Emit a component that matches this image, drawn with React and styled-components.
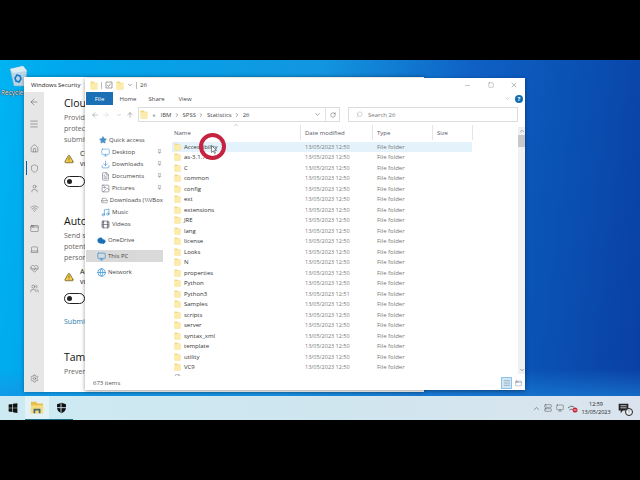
import React from 'react';
import styled, { createGlobalStyle } from 'styled-components';
import {
  ArrowLeft, ArrowRight, ArrowUp, ChevronDown, ChevronUp, ChevronRight, RotateCw, Search, Menu, Home, Shield,
  User, Wifi, AppWindow, Laptop, HeartPulse, Users, Settings, Minus, Square, X, Pin, Star, Monitor,
  Download, FileText, Image, HardDrive, Music, Film, Cloud, Globe, TriangleAlert, Server,
} from 'lucide-react';

const GlobalStyle = createGlobalStyle`
  html, body { margin: 0; padding: 0; background: #000; }
  body { font-family: "Open Sans", "Noto Sans", sans-serif; }
`;

const Screen = styled.div`
  width: 640px;
  height: 480px;
  display: flex;
  flex-direction: column;
  overflow: hidden;
  background: #000;
`;

const Bars = styled.div`
  height: ${p => p.$h}px;
  flex: none;
`;

const Desktop = styled.div`
  position: relative;
  height: 336px;
  flex: none;
  overflow: hidden;
  background:
    linear-gradient(to bottom, rgba(30, 140, 225, 0) 92%, rgba(30, 140, 225, 0.55) 100%),
    linear-gradient(97deg, #00b4f2 0%, #00a6ec 10%, #1296e0 47%, #0f60c4 70%, #0a52b4 84%, #0a3fa5 100%);
`;

const DesktopIcon = styled.div`
  position: absolute;
  left: 1px;
  top: 4px;
  width: 34px;
  display: flex;
  flex-direction: column;
  align-items: center;
  font-size: 6.5px;
  line-height: 9px;
  color: #fff;
  text-shadow: 0 0 1px #000, 0 0 1px #000;
  white-space: nowrap;
`;

/* Windows Security, behind */
const SecurityWindow = styled.div`
  position: absolute;
  left: 24px;
  top: 17px;
  width: 400px;
  height: 315px;
  background: #fff;
  display: flex;
  flex-direction: column;
  overflow: hidden;
  box-shadow: 0 0 4px rgba(0, 0, 0, 0.35);
`;

const SecTitle = styled.div`
  height: 15px;
  flex: none;
  display: flex;
  align-items: center;
  padding-left: 7px;
  font-size: 6px;
  color: #222;
`;

const SecBody = styled.div`
  flex: 1;
  display: flex;
  min-height: 0;
`;

const SideRail = styled.div`
  width: 20px;
  flex: none;
  background: #e6e6e6;
  display: flex;
  flex-direction: column;
  align-items: center;
  color: #333;
`;

const RailItem = styled.div`
  position: relative;
  width: 100%;
  height: ${p => p.$h || 20}px;
  margin-top: ${p => p.$mt || 0}px;
  display: flex;
  align-items: center;
  justify-content: center;
  ${p => p.$active && `
    &::before {
      content: '';
      position: absolute;
      left: 2px;
      top: 3px;
      bottom: 3px;
      width: 1px;
      background: #0a5c9e;
    }
  `}
`;

const SecContent = styled.div`
  flex: 1;
  padding: 3px 0 0 20px;
  white-space: nowrap;
`;

const SecHeading = styled.div`
  font-size: 10.5px;
  line-height: 16px;
  color: #111;
  margin-top: ${p => p.$mt || 0}px;
`;

const SecText = styled.div`
  font-size: 7px;
  line-height: 11px;
  color: #666;
  margin-top: 1px;
`;

const WarnRow = styled.div`
  display: flex;
  align-items: center;
  gap: 6px;
  margin-top: 4px;
  font-size: 7px;
  line-height: 10px;
  color: #222;
`;

const Toggle = styled.div`
  width: 21px;
  height: 11px;
  margin-top: ${p => p.$mt}px;
  box-sizing: border-box;
  border: 1px solid #222;
  border-radius: 6px;
  display: flex;
  align-items: center;
  padding-left: 2px;

  &::before {
    content: '';
    width: 5px;
    height: 5px;
    border-radius: 50%;
    background: #222;
  }
`;

const SecLink = styled.div`
  font-size: 7px;
  line-height: 10px;
  color: #2a7bae;
  margin-top: 13px;
`;

/* File Explorer */
const Explorer = styled.div`
  position: absolute;
  left: 85px;
  top: 18px;
  width: 440px;
  height: 312px;
  background: #fff;
  display: flex;
  flex-direction: column;
  overflow: hidden;
  color: #333;
  box-shadow: 0 1px 4px rgba(0, 0, 0, 0.4);
`;

const TitleBar = styled.div`
  height: 14px;
  flex: none;
  display: flex;
  align-items: center;
  padding-left: 5px;
  gap: 3px;
  font-size: 6px;
  color: #444;
`;

const TitleSep = styled.span`
  width: 1px;
  height: 7px;
  background: #bbb;
`;

const WinControls = styled.div`
  margin-left: auto;
  display: flex;
  color: #555;
`;

const WinControl = styled.div`
  width: 23px;
  height: 14px;
  display: flex;
  align-items: center;
  justify-content: center;
`;

const TabRow = styled.div`
  height: 13px;
  flex: none;
  display: flex;
  align-items: stretch;
  padding-left: 1px;
  font-size: 6px;
`;

const Tab = styled.div`
  width: ${p => p.$w}px;
  display: flex;
  align-items: center;
  justify-content: center;
  background: ${p => (p.$file ? '#1a6fb5' : 'transparent')};
  color: ${p => (p.$file ? '#fff' : '#444')};
`;

const HelpArea = styled.div`
  margin-left: auto;
  display: flex;
  align-items: center;
  gap: 4px;
  padding-right: 2px;
  color: #666;
`;

const HelpDot = styled.div`
  width: 8px;
  height: 8px;
  border-radius: 50%;
  background: #0f6cae;
  color: #fff;
  font-size: 6px;
  font-weight: 700;
  line-height: 8px;
  text-align: center;
`;

const AddressRow = styled.div`
  height: 15px;
  margin-top: 2px;
  flex: none;
  display: flex;
  align-items: center;
  color: #777;
`;

const NavButtons = styled.div`
  width: 53px;
  flex: none;
  display: flex;
  align-items: center;
  padding-left: 6px;
  box-sizing: border-box;
`;

const NavButton = styled.div`
  width: ${p => p.$w}px;
  display: flex;
  justify-content: center;
`;

const AddressBox = styled.div`
  width: 202px;
  height: 15px;
  box-sizing: border-box;
  border: 1px solid #dcdcdc;
  display: flex;
  align-items: center;
  font-size: 6px;
  color: #444;
  padding-left: 1px;
  gap: 2.500px;
`;

const AddressCrumbStart = styled.span`
  padding: 0 1px 0 2px;
`;

const AddressTools = styled.div`
  margin-left: auto;
  display: flex;
  align-items: center;
  align-self: stretch;
  gap: 4px;
  padding-right: 3px;
  color: #666;
`;

const AddressDivider = styled.span`
  width: 1px;
  align-self: stretch;
  background: #e2e2e2;
`;

const SearchBox = styled.div`
  width: 170px;
  height: 15px;
  box-sizing: border-box;
  border: 1px solid #dcdcdc;
  margin-left: 8px;
  display: flex;
  align-items: center;
  gap: 5px;
  padding-left: 7px;
  font-size: 6px;
  color: #777;
`;

const Main = styled.div`
  flex: 1;
  min-height: 0;
  display: flex;
`;

const NavPane = styled.div`
  width: 87px;
  flex: none;
  padding: 12px 0 0 1px;
  box-sizing: border-box;
`;

const NavItem = styled.div`
  height: 12px;
  margin-top: ${p => p.$mt || 0}px;
  padding-left: ${p => p.$indent}px;
  display: flex;
  align-items: center;
  gap: 2px;
  font-size: 6px;
  color: #444;
  white-space: nowrap;
  background: ${p => (p.$active ? '#d9d9d9' : 'transparent')};
  width: 77px;
  box-sizing: border-box;
  position: relative;
`;

const PinMark = styled.span`
  position: absolute;
  left: 71px;
  top: 3px;
  color: #777;
  display: flex;
`;

const ListPane = styled.div`
  flex: 1;
  min-width: 0;
  display: flex;
  flex-direction: column;
`;

const HeaderRow = styled.div`
  height: 15px;
  flex: none;
  margin-top: 3px;
  display: flex;
  position: relative;
  font-size: 6px;
  color: #556;
`;

const HeaderCell = styled.div`
  width: ${p => p.$w}px;
  box-sizing: border-box;
  padding-left: ${p => p.$pl || 4}px;
  border-right: 1px solid #e5e5e5;
  display: flex;
  align-items: center;
`;

const SortCaret = styled.span`
  position: absolute;
  left: 61px;
  top: -3px;
  color: #999;
  display: flex;
`;

const Rows = styled.div`
  flex: 1;
  min-height: 0;
  overflow: hidden;
  margin-top: 1.500px;
`;

const Row = styled.div`
  height: 10.5px;
  width: 300px;
  display: flex;
  align-items: center;
  font-size: 6px;
  background: ${p => (p.$selected ? '#e3f2fb' : 'transparent')};
`;

const NameCell = styled.div`
  width: 133px;
  padding-left: 2px;
  box-sizing: border-box;
  display: flex;
  align-items: center;
  gap: 3px;
  color: #333;
  white-space: nowrap;
`;

const DateCell = styled.div`
  width: 72px;
  font-size: 5.500px;
  color: #777;
  white-space: nowrap;
`;

const TypeCell = styled.div`
  width: 68px;
  color: #777;
  white-space: nowrap;
`;

const ScrollBar = styled.div`
  width: 7px;
  flex: none;
  margin: 5px 0 2px auto;
  background: #f0f0f0;
  display: flex;
  flex-direction: column;
  align-items: center;
  color: #555;
`;

const ScrollEnd = styled.div`
  height: 8px;
  margin-top: ${p => (p.$bottom ? 'auto' : 0)};
  display: flex;
  align-items: center;
`;

const ScrollThumb = styled.div`
  width: 7px;
  height: 12px;
  background: #c8c8c8;
`;

const StatusBar = styled.div`
  height: 14px;
  flex: none;
  display: flex;
  align-items: center;
  padding-left: 8px;
  font-size: 6px;
  color: #555;
`;

const ViewButtons = styled.div`
  margin-left: auto;
  display: flex;
  gap: 1px;
  padding-right: 1px;
`;

const ViewButton = styled.div`
  width: 11px;
  height: 12px;
  box-sizing: border-box;
  display: flex;
  align-items: center;
  justify-content: center;
  background: ${p => (p.$on ? '#cfe6f5' : 'transparent')};
  border: 1px solid ${p => (p.$on ? '#8fc4e6' : 'transparent')};
  color: #567;
`;

/* Click highlight, over the list */
const ClickRing = styled.div`
  position: absolute;
  left: 199px;
  top: 73px;
  width: 27px;
  height: 27px;
  box-sizing: border-box;
  border: 4px solid #c5233f;
  border-radius: 50%;
`;

const Pointer = styled.svg`
  position: absolute;
  left: 211px;
  top: 85px;
`;

/* Taskbar */
const Taskbar = styled.div`
  height: 24px;
  flex: none;
  display: flex;
  align-items: center;
  background: linear-gradient(to right, #cdeaf2 0%, #cfe6ef 50%, #dbe4ee 100%);
  color: #111;
`;

const StartButton = styled.div`
  width: 25px;
  height: 24px;
  display: flex;
  align-items: center;
  justify-content: center;
`;

const TaskButton = styled.div`
  width: ${p => p.$w || 24}px;
  height: 24px;
  box-sizing: border-box;
  display: flex;
  align-items: center;
  justify-content: center;
  background: ${p => (p.$active ? '#e3f2f7' : 'transparent')};
  border-bottom: 1px solid #1d6f86;
`;

const Tray = styled.div`
  margin-left: auto;
  display: flex;
  align-items: center;
  color: #333;
`;

const TrayIcon = styled.div`
  width: 12px;
  display: flex;
  justify-content: center;
`;

const Clock = styled.div`
  width: 38px;
  margin-left: -1px;
  text-align: center;
  font-size: 5.500px;
  line-height: 8px;
  color: #222;
`;

const NotifyButton = styled.div`
  width: 25px;
  box-sizing: border-box;
  padding-left: 3px;
  display: flex;
  position: relative;
`;

const NotifyBadge = styled.span`
  position: absolute;
  left: 10px;
  top: 5px;
  width: 6px;
  height: 6px;
  border-radius: 50%;
  background: #e8eef2;
  border: 1px solid #222;
  font-size: 4px;
  line-height: 6px;
  text-align: center;
`;

const FolderIcon = ({ size = 8 }) => (
  <svg width={size} height={size + 1} viewBox="0 0 14 16">
    <path d="M1 1h5l2 2h5v12H1z" fill="#f3d77c" />
    <path d="M1 4h12v11H1z" fill="#fbecab" />
  </svg>
);

const CheckBoxGlyph = () => (
  <svg width="8" height="8" viewBox="0 0 16 16" fill="none" stroke="#666" strokeWidth="1.200">
    <path d="M2 2h12v12H2z" />
    <path d="M4.500 8l2.500 3 4.500-6" />
  </svg>
);

const RecycleBin = () => (
  <svg width="22" height="24" viewBox="0 0 22 24">
    <path d="M3 5l13-3 4 5-2 15H7L3 5z" fill="#b8d6e6" stroke="#7fa6bc" strokeWidth="0.5" />
    <path d="M3 5l13-3 4 5-14 2z" fill="#dcecf4" />
    <path d="M10 11l3 1 1 3-2 3-3-1-1-3z" fill="none" stroke="#1b78c8" strokeWidth="1.6" />
  </svg>
);

const WinLogo = ({ size = 10, color = '#111' }) => (
  <svg width={size} height={size} viewBox="0 0 16 16" fill={color}>
    <path d="M1 2.500l6-1v6H1zM8 1.300l7-1.100V7.500H8zM1 8.500h6v6l-6-1zM8 8.500h7v7.300l-7-1.100z" />
  </svg>
);

const SecurityShield = () => (
  <svg width="11" height="12" viewBox="0 0 16 16">
    <path d="M8 0.500l6.500 2v5c0 4-3 6.500-6.500 8-3.500-1.500-6.500-4-6.500-8v-5z" fill="#111" />
    <path d="M7.300 1v14M1.500 7.500h13" stroke="#cde6ef" strokeWidth="1.300" />
  </svg>
);

const ExplorerGlyph = () => (
  <svg width="14" height="13" viewBox="0 0 16 15">
    <path d="M1 1h6l1.500 2H15v11H1z" fill="#e8c04e" />
    <path d="M1 5h14v9H1z" fill="#f6dc7c" />
    <path d="M4 9h8v5h-2v-3H6v3H4z" fill="#4a6a78" />
  </svg>
);

const NetworkOff = () => (
  <svg width="11" height="9" viewBox="0 0 22 18" fill="none">
    <path d="M2 8a9 9 0 0 1 12-2M5 12a5 5 0 0 1 6-1" stroke="#444" strokeWidth="1.500" />
    <circle cx="16" cy="12" r="5" fill="#c8202f" />
    <path d="M13 12h6" stroke="#fff" strokeWidth="1.500" />
  </svg>
);

const NotifyGlyph = () => (
  <svg width="11" height="11" viewBox="0 0 16 16">
    <path d="M1 1h14v10H7l-3 4v-4H1z" fill="#222" />
    <path d="M3.500 4h9M3.500 7h9" stroke="#dbe4ee" strokeWidth="1.200" />
  </svg>
);

const navItems = [
  { label: 'Desktop', Icon: Monitor, color: '#3b94d8', pin: true },
  { label: 'Downloads', Icon: Download, color: '#2f7fd0', pin: true },
  { label: 'Documents', Icon: FileText, color: '#667', pin: true },
  { label: 'Pictures', Icon: Image, color: '#667', pin: true },
  { label: 'Downloads (\\\\VBox', Icon: HardDrive, color: '#556' },
  { label: 'Music', Icon: Music, color: '#1f7fc8' },
  { label: 'Videos', Icon: Film, color: '#445' },
];

const folders = [
  'Accessibility', 'as-3.1.7b', 'C', 'common', 'config', 'ext', 'extensions', 'JRE', 'lang', 'license',
  'Looks', 'N', 'properties', 'Python', 'Python3', 'Samples', 'scripts', 'server', 'syntax_xml',
  'template', 'utility', 'VC9',
];

const railIcons = [
  { Icon: Shield, h: 20, active: true },
  { Icon: User, h: 20 },
  { Icon: Wifi, h: 20 },
  { Icon: AppWindow, h: 21 },
  { Icon: Laptop, h: 20 },
  { Icon: HeartPulse, h: 19 },
  { Icon: Users, h: 20 },
];

export default function App() {
  return (
    <Screen>
      <GlobalStyle />
      <Bars $h={60} />
      <Desktop>
        <DesktopIcon>
          <RecycleBin />
          <span>Recycle Bin</span>
        </DesktopIcon>

        <SecurityWindow>
          <SecTitle>Windows Security</SecTitle>
          <SecBody>
            <SideRail>
              <RailItem $h={20}><ArrowLeft size={10} strokeWidth={1} /></RailItem>
              <RailItem $h={12} $mt={6}><Menu size={10} strokeWidth={1} /></RailItem>
              <RailItem $h={20} $mt={8}><Home size={9} strokeWidth={1} /></RailItem>
              {railIcons.map(({ Icon, h, active }, i) => (
                <RailItem key={i} $h={h} $active={active}><Icon size={9} strokeWidth={1} /></RailItem>
              ))}
              <RailItem $h={12} $mt={74}><Settings size={9} strokeWidth={1} /></RailItem>
            </SideRail>
            <SecContent>
              <SecHeading>Cloud-delivered protection</SecHeading>
              <SecText>
                Provides increased and faster<br />
                protection with access to the latest<br />
                submitted samples.
              </SecText>
              <WarnRow>
                <TriangleAlert size={10} color="#4a3f10" fill="#f2c94c" strokeWidth={1.5} />
                <div>Cloud-delivered protection is off.<br />vulnerable.</div>
              </WarnRow>
              <Toggle $mt={7} />
              <SecHeading $mt={26}>Automatic sample submission</SecHeading>
              <SecText>
                Send sample files to Microsoft to<br />
                potentially protect you and others from<br />
                personal threats.
              </SecText>
              <WarnRow>
                <TriangleAlert size={10} color="#4a3f10" fill="#f2c94c" strokeWidth={1.5} />
                <div>Automatic sample submission is off.<br />vulnerable.</div>
              </WarnRow>
              <Toggle $mt={6} />
              <SecLink>Submit a sample manually</SecLink>
              <SecHeading $mt={22}>Tamper Protection</SecHeading>
              <SecText>Prevents others from tampering</SecText>
            </SecContent>
          </SecBody>
        </SecurityWindow>

        <Explorer>
          <TitleBar>
            <FolderIcon size={8} />
            <TitleSep />
            <CheckBoxGlyph />
            <FolderIcon size={8} />
            <ChevronDown size={6} />
            <TitleSep />
            <span>26</span>
            <WinControls>
              <WinControl><Minus size={7} strokeWidth={1.2} /></WinControl>
              <WinControl><Square size={6} strokeWidth={1.2} /></WinControl>
              <WinControl><X size={8} strokeWidth={1.2} /></WinControl>
            </WinControls>
          </TitleBar>
          <TabRow>
            <Tab $file $w={27}>File</Tab>
            <Tab $w={30}>Home</Tab>
            <Tab $w={27}>Share</Tab>
            <Tab $w={30}>View</Tab>
            <HelpArea>
              <ChevronDown size={7} strokeWidth={1} />
              <HelpDot>?</HelpDot>
            </HelpArea>
          </TabRow>
          <AddressRow>
            <NavButtons>
              <NavButton $w={8}><ArrowLeft size={8} strokeWidth={1.3} /></NavButton>
              <NavButton $w={14}><ArrowRight size={8} strokeWidth={1.3} color="#ccc" /></NavButton>
              <NavButton $w={12}><ChevronDown size={6} strokeWidth={1.3} /></NavButton>
              <NavButton $w={10}><ArrowUp size={8} strokeWidth={1.5} /></NavButton>
            </NavButtons>
            <AddressBox>
              <FolderIcon size={8} />
              <AddressCrumbStart>«</AddressCrumbStart>
              <span>&nbsp;IBM</span><ChevronRight size={6} />
              <span>SPSS</span><ChevronRight size={6} />
              <span>Statistics</span><ChevronRight size={6} />
              <span>26</span>
              <AddressTools>
                <ChevronDown size={7} />
                <AddressDivider />
                <RotateCw size={6} />
              </AddressTools>
            </AddressBox>
            <SearchBox>
              <Search size={7} strokeWidth={1} style={{ transform: 'scaleX(-1)' }} />
              <span>Search 26</span>
            </SearchBox>
          </AddressRow>
          <Main>
            <NavPane>
              <NavItem $indent={13}>
                <Star size={8} color="#4a90c8" fill="#4a90c8" /><span>Quick access</span>
              </NavItem>
              {navItems.map(({ label, Icon, color, pin }) => (
                <NavItem key={label} $indent={15}>
                  <Icon size={9} color={color} strokeWidth={1.5} /><span>{label}</span>
                  {pin && <PinMark><Pin size={5} /></PinMark>}
                </NavItem>
              ))}
              <NavItem $indent={11} $mt={4}>
                <Cloud size={9} color="#1a6fb5" fill="#1a6fb5" /><span>OneDrive</span>
              </NavItem>
              <NavItem $indent={11} $mt={4} $active>
                <Monitor size={9} color="#3b94d8" /><span>This PC</span>
              </NavItem>
              <NavItem $indent={11} $mt={4}>
                <Globe size={9} color="#3b94d8" /><span>Network</span>
              </NavItem>
            </NavPane>
            <ListPane>
              <HeaderRow>
                <SortCaret><ChevronUp size={6} /></SortCaret>
                <HeaderCell $w={129} $pl={2}>Name</HeaderCell>
                <HeaderCell $w={72}>Date modified</HeaderCell>
                <HeaderCell $w={60}>Type</HeaderCell>
                <HeaderCell $w={40}>Size</HeaderCell>
              </HeaderRow>
              <Rows>
                {folders.map((name, i) => (
                  <Row key={name} $selected={i === 0}>
                    <NameCell><FolderIcon size={7} /><span>{name}</span></NameCell>
                    <DateCell>{name === 'Python3' ? '13/05/2023 12:51' : '13/05/2023 12:50'}</DateCell>
                    <TypeCell>File folder</TypeCell>
                  </Row>
                ))}
                <Row>
                  <NameCell><FileText size={8} strokeWidth={1} /><span>vcredist.dll</span></NameCell>
                  <DateCell>22/02/2023 21:53</DateCell>
                  <TypeCell>Application extens</TypeCell>
                  <span>277 KB</span>
                </Row>
              </Rows>
            </ListPane>
            <ScrollBar>
              <ScrollEnd><ChevronUp size={6} /></ScrollEnd>
              <ScrollThumb />
              <ScrollEnd $bottom><ChevronDown size={6} /></ScrollEnd>
            </ScrollBar>
          </Main>
          <StatusBar>
            <span>673 items</span>
            <ViewButtons>
              <ViewButton $on><Menu size={8} strokeWidth={1.2} /></ViewButton>
              <ViewButton><AppWindow size={7} strokeWidth={1.2} /></ViewButton>
            </ViewButtons>
          </StatusBar>
        </Explorer>

        <ClickRing />
        <Pointer width="6" height="9" viewBox="0 0 6 9">
          <path d="M0.500 0.500v7l1.800-1.600L3.500 8.500l1-.5L3.300 5.500h2.200z" fill="#fff" stroke="#222" strokeWidth="0.500" />
        </Pointer>
      </Desktop>

      <Taskbar>
        <StartButton><WinLogo /></StartButton>
        <TaskButton $active><ExplorerGlyph /></TaskButton>
        <TaskButton><SecurityShield /></TaskButton>
        <Tray>
          <TrayIcon><ChevronUp size={9} strokeWidth={1.2} /></TrayIcon>
          <TrayIcon><Server size={8} strokeWidth={1.2} /></TrayIcon>
          <TrayIcon><Monitor size={8} strokeWidth={1.2} /></TrayIcon>
          <TrayIcon><NetworkOff /></TrayIcon>
          <Clock>12:59<br />13/05/2023</Clock>
          <NotifyButton>
            <NotifyGlyph />
            <NotifyBadge>1</NotifyBadge>
          </NotifyButton>
        </Tray>
      </Taskbar>
      <Bars $h={60} />
    </Screen>
  );
}
